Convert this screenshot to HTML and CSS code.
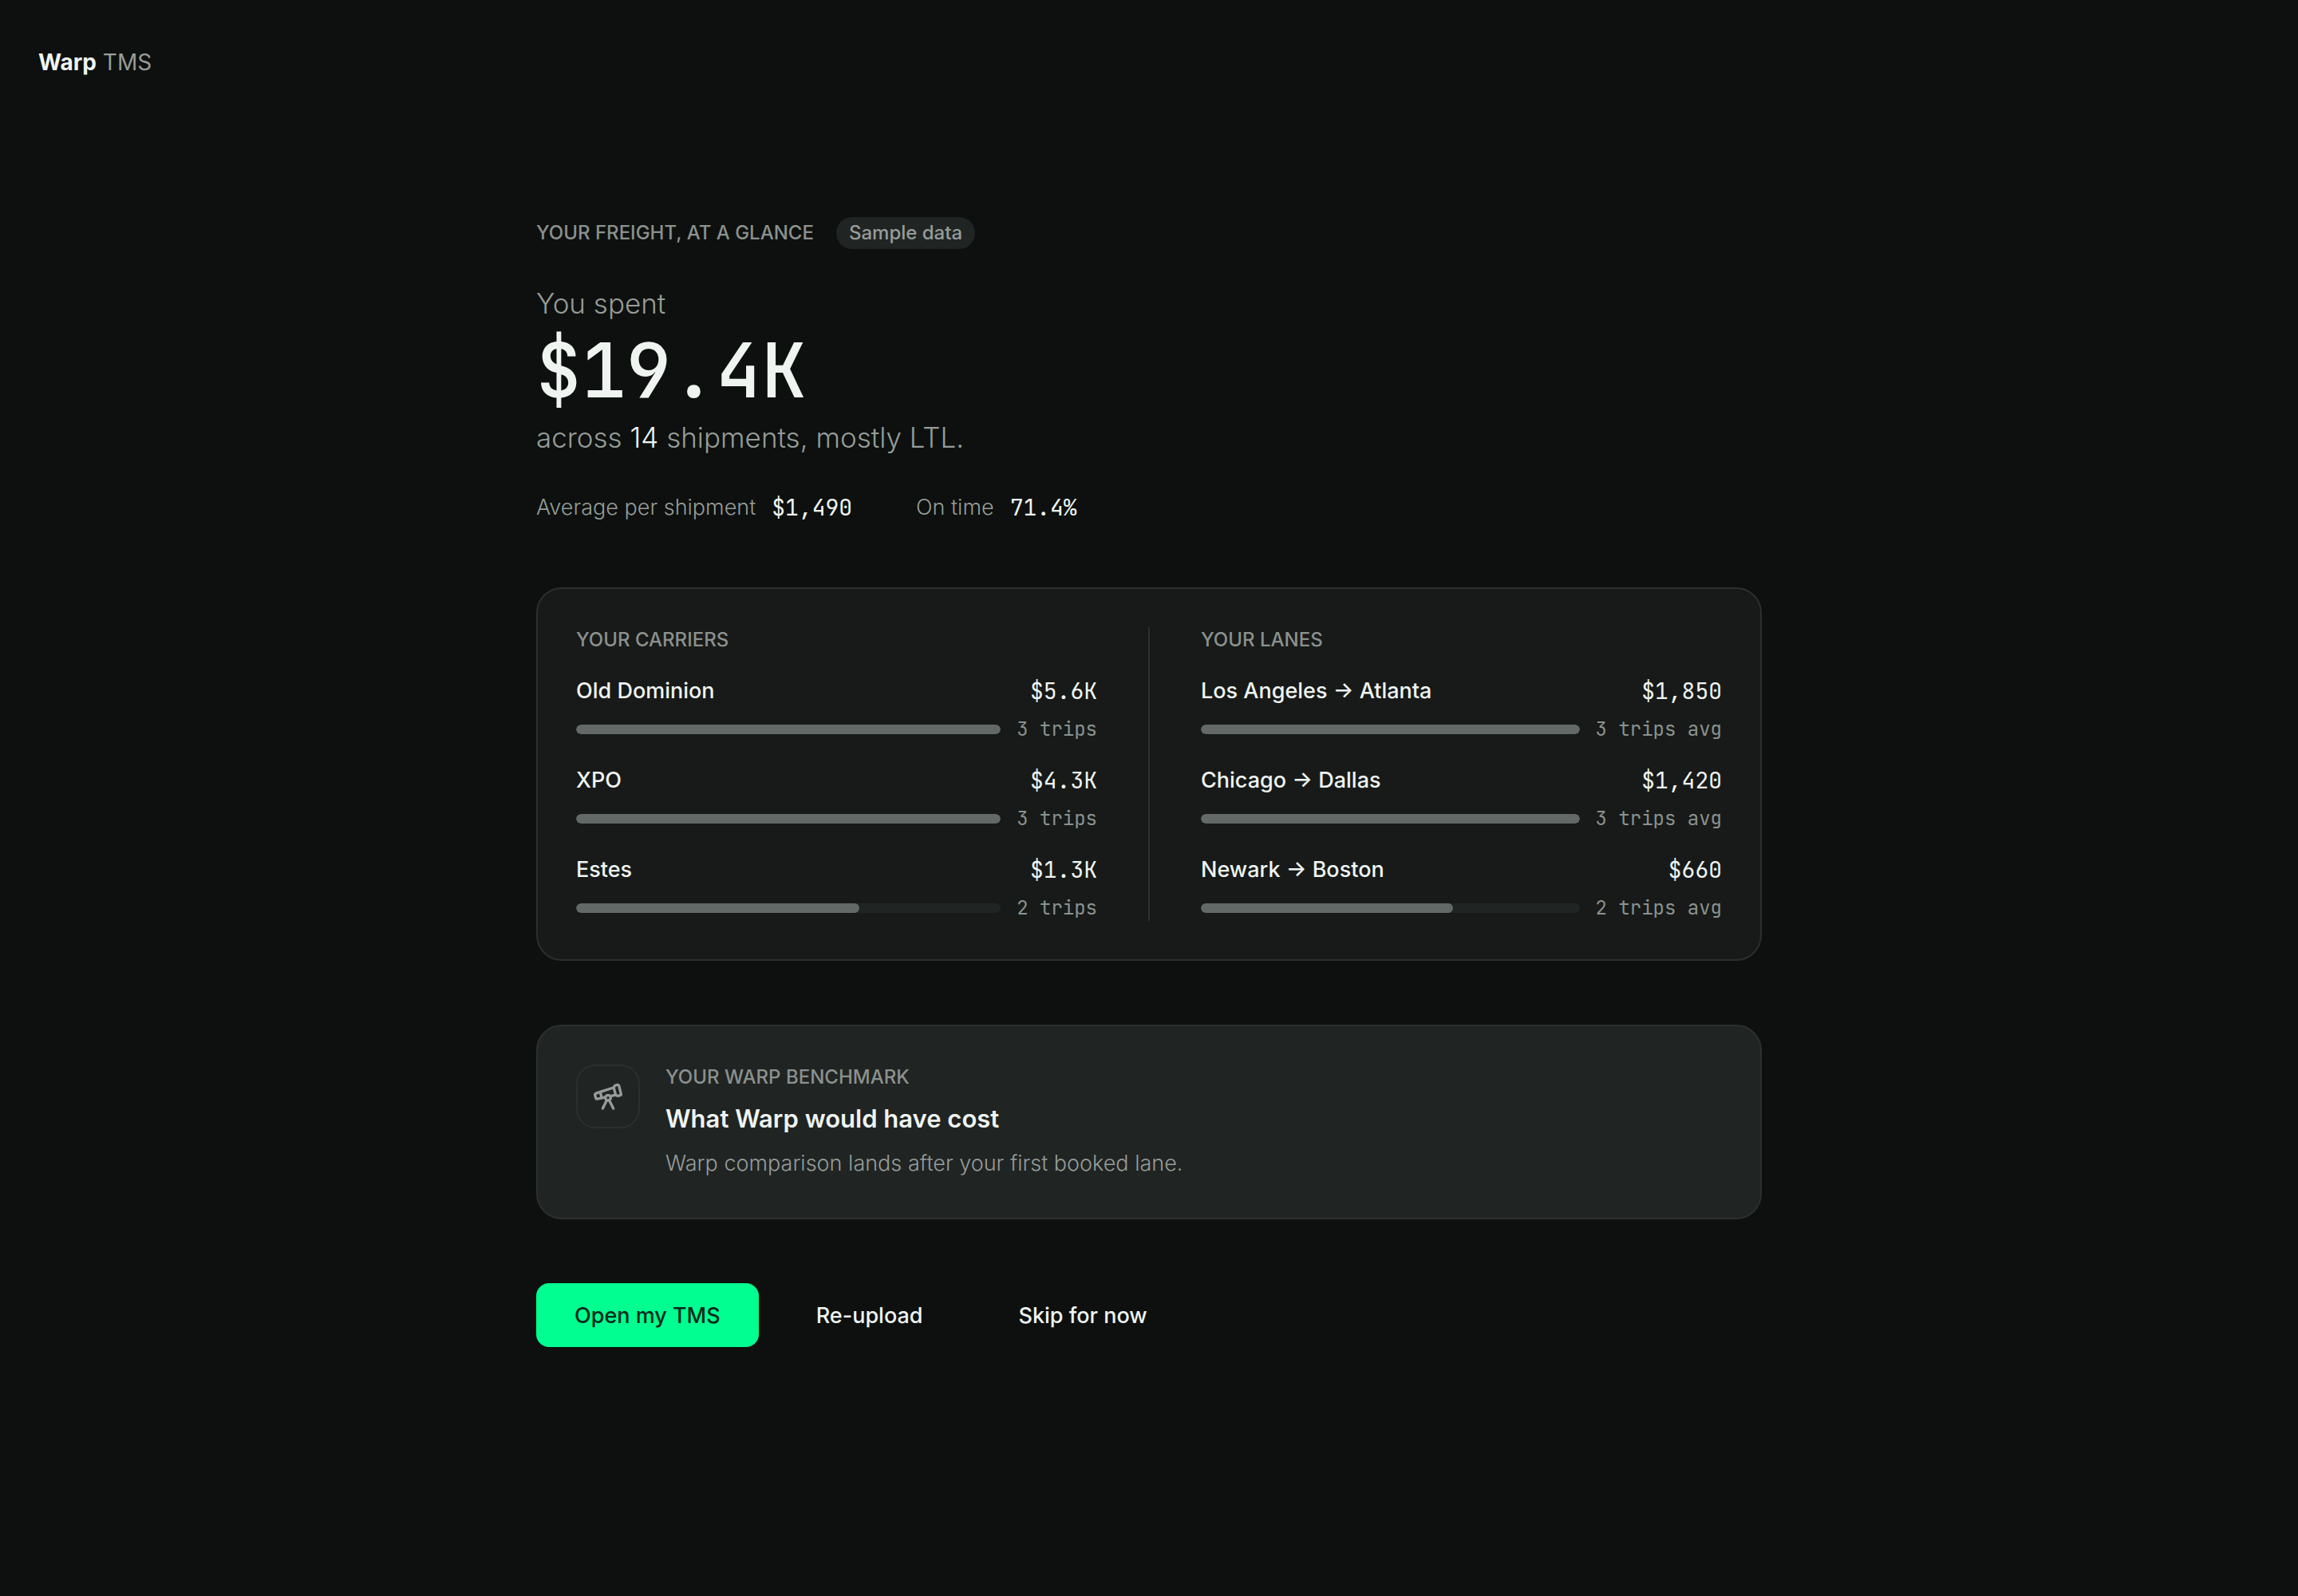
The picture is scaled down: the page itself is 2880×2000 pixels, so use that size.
FILE: index.html
```html
<!DOCTYPE html>
<html lang="en">
<head>
    <meta charset="UTF-8">
    <meta name="viewport" content="width=device-width, initial-scale=1.0">
    <title>Warp TMS</title>
    <link rel="stylesheet" href="styles.css">
</head>
<body>
    <header class="topbar">
        <div class="logo"><strong>Warp</strong> <span>TMS</span></div>
    </header>

    <main class="container">
        <div class="intro">
            <h1 class="label">YOUR FREIGHT, AT A GLANCE</h1>
            <span class="pill">Sample data</span>
        </div>

        <section class="spend">
            <p class="lead">You spent</p>
            <p class="total">$19.4K</p>
            <p class="lead">across <span class="count">14</span> shipments, mostly LTL.</p>
        </section>

        <dl class="stats">
            <div class="stat">
                <dt>Average per shipment</dt>
                <dd>$1,490</dd>
            </div>
            <div class="stat">
                <dt>On time</dt>
                <dd>71.4%</dd>
            </div>
        </dl>

        <section class="card breakdown">
            <div class="column">
                <h2 class="label">YOUR CARRIERS</h2>
                <div class="row">
                    <div class="row-top"><span>Old Dominion</span><span class="amount">$5.6K</span></div>
                    <div class="row-bar">
                        <div class="track"><div class="fill" style="width: 100%"></div></div>
                        <span class="trips">3 trips</span>
                    </div>
                </div>
                <div class="row">
                    <div class="row-top"><span>XPO</span><span class="amount">$4.3K</span></div>
                    <div class="row-bar">
                        <div class="track"><div class="fill" style="width: 100%"></div></div>
                        <span class="trips">3 trips</span>
                    </div>
                </div>
                <div class="row">
                    <div class="row-top"><span>Estes</span><span class="amount">$1.3K</span></div>
                    <div class="row-bar">
                        <div class="track"><div class="fill" style="width: 66.67%"></div></div>
                        <span class="trips">2 trips</span>
                    </div>
                </div>
            </div>

            <div class="divider"></div>

            <div class="column">
                <h2 class="label">YOUR LANES</h2>
                <div class="row">
                    <div class="row-top"><span>Los Angeles → Atlanta</span><span class="amount">$1,850</span></div>
                    <div class="row-bar">
                        <div class="track"><div class="fill" style="width: 100%"></div></div>
                        <span class="trips">3 trips avg</span>
                    </div>
                </div>
                <div class="row">
                    <div class="row-top"><span>Chicago → Dallas</span><span class="amount">$1,420</span></div>
                    <div class="row-bar">
                        <div class="track"><div class="fill" style="width: 100%"></div></div>
                        <span class="trips">3 trips avg</span>
                    </div>
                </div>
                <div class="row">
                    <div class="row-top"><span>Newark → Boston</span><span class="amount">$660</span></div>
                    <div class="row-bar">
                        <div class="track"><div class="fill" style="width: 66.67%"></div></div>
                        <span class="trips">2 trips avg</span>
                    </div>
                </div>
            </div>
        </section>

        <section class="card benchmark">
            <div class="icon-box">
                <svg class="icon" viewBox="0 0 24 24" aria-hidden="true">
                    <path d="m10.065 12.493-6.18 1.318a.934.934 0 0 1-1.108-.702l-.537-2.15a1.07 1.07 0 0 1 .691-1.265l13.504-4.44"/>
                    <path d="m13.56 11.747 4.332-.924"/>
                    <path d="m16 21-3.105-6.21"/>
                    <path d="M16.485 5.94a2 2 0 0 1 1.455-2.425l1.09-.272a1 1 0 0 1 1.212.727l1.515 6.06a1 1 0 0 1-.727 1.213l-1.09.272a2 2 0 0 1-2.425-1.455z"/>
                    <path d="m6.158 8.633 1.114 4.456"/>
                    <path d="m8 21 3.105-6.21"/>
                    <circle cx="12" cy="13" r="2"/>
                </svg>
            </div>
            <div class="benchmark-text">
                <p class="label">YOUR WARP BENCHMARK</p>
                <h2 class="benchmark-title">What Warp would have cost</h2>
                <p class="benchmark-note">Warp comparison lands after your first booked lane.</p>
            </div>
        </section>

        <div class="actions">
            <button type="button" class="btn btn-primary">Open my TMS</button>
            <button type="button" class="btn">Re-upload</button>
            <button type="button" class="btn">Skip for now</button>
        </div>
    </main>
</body>
</html>
```
FILE: styles.css
```css
* {
    box-sizing: border-box;
    margin: 0;
    padding: 0;
}

body {
    min-height: 100vh;
    background-color: #0d100e;
    color: #eff4f1;
    font-family: Inter, "Liberation Sans", sans-serif;
    font-size: 27px;
    line-height: 36px;
}

.topbar {
    padding: 60px 48px;
}

.logo {
    font-size: 28px;
    color: #969c99;
}

.logo strong {
    font-weight: 700;
    color: #eff4f1;
}

.container {
    max-width: 1632px;
    margin: 0 auto;
    padding: 116px 48px 96px;
}

.label {
    font-size: 24px;
    font-weight: 500;
    line-height: 32px;
    color: #8b918e;
}

.intro {
    display: flex;
    align-items: center;
    gap: 28px;
}

.pill {
    padding: 4px 16px;
    border-radius: 20px;
    background-color: #202423;
    color: #969c99;
    font-size: 24px;
    font-weight: 500;
    line-height: 32px;
}

/* Headline spend */
.spend {
    margin-top: 40px;
}

.lead {
    font-size: 35px;
    font-weight: 300;
    line-height: 56px;
    color: #969c99;
}

.count {
    color: #eff4f1;
}

.total {
    font-family: "JetBrains Mono", "DejaVu Sans Mono", monospace;
    font-size: 94px;
    font-weight: 500;
    line-height: 112px;
}

.stats {
    display: flex;
    gap: 80px;
    margin-top: 40px;
    line-height: 40px;
}

.stat {
    display: flex;
    align-items: center;
    gap: 20px;
}

.stat dt {
    font-weight: 300;
    color: #969c99;
}

.stat dd,
.amount {
    font-family: "JetBrains Mono", "DejaVu Sans Mono", monospace;
    font-size: 28px;
}

.card {
    margin-top: 80px;
    padding: 48px;
    border: 2px solid #2b2f2d;
    border-radius: 32px;
    background-color: #171a18;
}

/* Carriers and lanes */
.breakdown {
    display: grid;
    grid-template-columns: 1fr 2px 1fr;
    gap: 64px;
}

.divider {
    background-color: #2b2f2d;
}

.column {
    display: flex;
    flex-direction: column;
    gap: 32px;
}

.row {
    display: flex;
    flex-direction: column;
    gap: 16px;
}

.row-top {
    display: flex;
    align-items: center;
    justify-content: space-between;
    font-weight: 500;
    line-height: 32px;
}

.amount {
    font-weight: 400;
}

.row-bar {
    display: flex;
    align-items: center;
    gap: 20px;
}

.track {
    flex: 1;
    height: 12px;
    border-radius: 6px;
    background-color: #202423;
    overflow: hidden;
}

.fill {
    height: 100%;
    border-radius: 6px;
    background-color: #626966;
}

.trips {
    color: #8b918e;
    font-family: "JetBrains Mono", "DejaVu Sans Mono", monospace;
    font-size: 24px;
    line-height: 32px;
}

/* Benchmark */
.benchmark {
    display: flex;
    gap: 32px;
    background-color: #202423;
}

.icon-box {
    display: flex;
    align-items: center;
    justify-content: center;
    width: 80px;
    height: 80px;
    border: 2px solid #2b2f2d;
    border-radius: 24px;
}

.icon {
    width: 40px;
    height: 40px;
    fill: none;
    stroke: #969c99;
    stroke-width: 2;
    stroke-linecap: round;
    stroke-linejoin: round;
}

.benchmark-title {
    margin-top: 16px;
    font-size: 31px;
    font-weight: 600;
    line-height: 40px;
}

.benchmark-note {
    margin-top: 16px;
    font-weight: 300;
    line-height: 40px;
    color: #969c99;
}

.actions {
    display: flex;
    flex-wrap: wrap;
    gap: 24px;
    margin-top: 80px;
}

.btn {
    height: 80px;
    padding: 0 48px;
    border: none;
    border-radius: 16px;
    background-color: transparent;
    color: #eff4f1;
    font-family: inherit;
    font-size: 27px;
    font-weight: 500;
    cursor: pointer;
}

.btn:hover {
    background-color: #171a18;
}

.btn-primary,
.btn-primary:hover {
    background-color: #00ff90;
    color: #04281a;
}
```
